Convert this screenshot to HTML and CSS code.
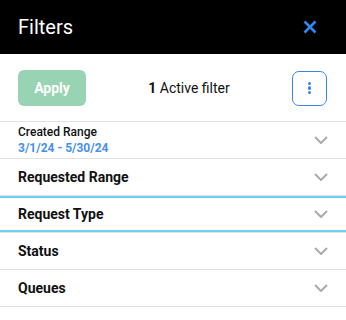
FILE: index.html
```html
<!DOCTYPE html>
<html lang="en">
<head>
  <meta charset="UTF-8">
  <meta name="viewport" content="width=device-width, initial-scale=1.0">
  <title>Filters</title>

  <link rel="stylesheet" href="styles.css">
</head>
<body>
  <div class="panel">
    <div class="panel-header">
      <span class="panel-title">Filters</span>
      <button class="close-btn" aria-label="Close">
        <svg width="14" height="14" viewBox="0 0 14 14">
          <path d="M1.5 1.5 L12.5 12.5 M12.5 1.5 L1.5 12.5" stroke="#2f87f2" stroke-width="2.6" stroke-linecap="butt" fill="none"/>
        </svg>
      </button>
    </div>

    <div class="toolbar">
      <button class="apply-btn">Apply</button>
      <div class="active-count"><b>1</b> Active filter</div>
      <button class="more-btn" aria-label="More">
        <span class="dot"></span>
        <span class="dot"></span>
        <span class="dot"></span>
      </button>
    </div>

    <ul class="filter-list">
      <li class="filter-row">
        <div class="filter-text">
          <div class="filter-label small">Created Range</div>
          <div class="filter-value">3/1/24 - 5/30/24</div>
        </div>
        <svg class="chevron" width="14" height="8" viewBox="0 0 14 8"><path d="M1 1 L7 7 L13 1" /></svg>
      </li>
      <li class="filter-row">
        <div class="filter-label">Requested Range</div>
        <svg class="chevron" width="14" height="8" viewBox="0 0 14 8"><path d="M1 1 L7 7 L13 1" /></svg>
      </li>
      <li class="filter-row focused">
        <div class="filter-label">Request Type</div>
        <svg class="chevron" width="14" height="8" viewBox="0 0 14 8"><path d="M1 1 L7 7 L13 1" /></svg>
      </li>
      <li class="filter-row">
        <div class="filter-label">Status</div>
        <svg class="chevron" width="14" height="8" viewBox="0 0 14 8"><path d="M1 1 L7 7 L13 1" /></svg>
      </li>
      <li class="filter-row">
        <div class="filter-label">Queues</div>
        <svg class="chevron" width="14" height="8" viewBox="0 0 14 8"><path d="M1 1 L7 7 L13 1" /></svg>
      </li>
    </ul>
  </div>
</body>
</html>
```

FILE: styles.css
```css
body {
  margin: 0;
  background: #fff;
  font-family: Roboto, "Liberation Sans", Arial, sans-serif;
  color: #111;
}

button {
  font-family: inherit;
  cursor: pointer;
}

.panel {
  width: 346px;
}

/* header bar */
.panel-header {
  height: 54px;
  background: #000;
  display: flex;
  align-items: center;
  justify-content: space-between;
  padding: 0 29px 0 18px;
  box-sizing: border-box;
}
.panel-title {
  color: #fff;
  font-size: 20px;
  font-weight: 400;
}
.close-btn {
  background: none;
  border: 0;
  padding: 0;
  width: 14px;
  height: 14px;
  display: flex;
}

/* apply / count / menu */
.toolbar {
  display: flex;
  align-items: center;
  justify-content: space-between;
  padding: 16px 19px 15px 18px;
  border-bottom: 1px solid #e2e2e2;
}
.apply-btn {
  width: 68px;
  height: 36px;
  border: 0;
  border-radius: 6px;
  background: #98d4b3;
  color: #fff;
  font-size: 14px;
  font-weight: 700;
}
.active-count {
  font-size: 14px;
}
.active-count b {
  font-weight: 700;
}
.more-btn {
  width: 35px;
  height: 35px;
  border: 1px solid #3a86e8;
  border-radius: 7px;
  background: #fff;
  padding: 0;
  display: flex;
  flex-direction: column;
  align-items: center;
  justify-content: center;
  gap: 1.7px;
}
.dot {
  width: 3.2px;
  height: 3.2px;
  border-radius: 50%;
  background: #3a86e8;
}

/* filter rows */
.filter-list {
  list-style: none;
  margin: 0;
  padding: 0;
}
.filter-row {
  height: 36px;
  display: flex;
  align-items: center;
  justify-content: space-between;
  padding: 0 19px 0 18px;
  border-bottom: 1px solid #e2e2e2;
}
.filter-row.focused {
  box-shadow: inset 0 2px 0 #6dcff6, inset 0 -2px 0 #6dcff6;
}
.filter-label {
  font-size: 14px;
  font-weight: 700;
}
.filter-label.small {
  font-size: 12px;
  font-weight: 500;
  line-height: 15px;
}
.filter-value {
  font-size: 12px;
  font-weight: 700;
  color: #4590ee;
  line-height: 16px;
}
.chevron {
  margin-right: -1px;
}
.chevron path {
  fill: none;
  stroke: #ababab;
  stroke-width: 2;
}
```
